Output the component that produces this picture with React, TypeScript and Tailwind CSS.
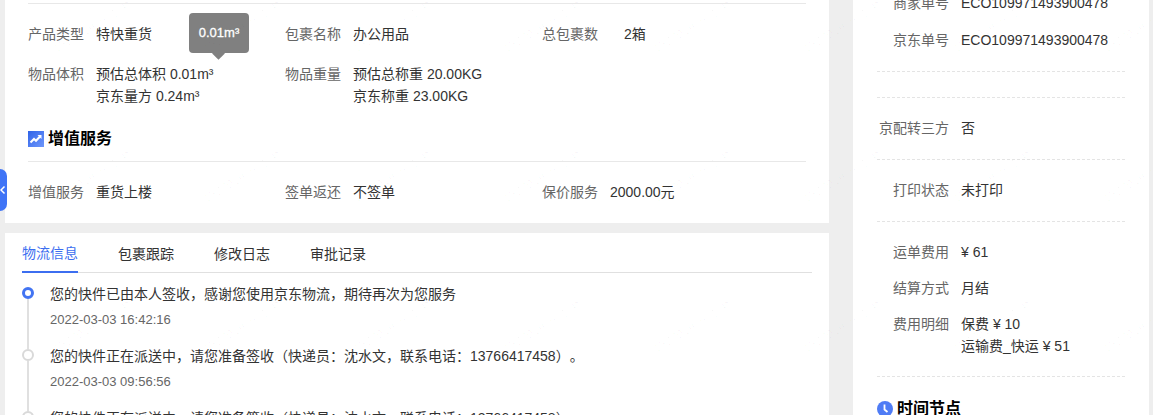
import React from 'react';

const FONT = '"Liberation Sans", "Noto Sans CJK SC", sans-serif';

const Field = ({ label, lines, gap = 'ml-3' }: { label: string; lines: string[]; gap?: string }) => (
    <div className="flex w-[257px] text-sm leading-[22px]">
        <span className="w-14 shrink-0 text-[#666666]">{label}</span>
        <div className={`${gap} text-[#333333] whitespace-nowrap`}>
            {lines.map(line => <div key={line}>{line}</div>)}
        </div>
    </div>
);

const SideRow = ({ label, lines, className = '' }: { label: string; lines: string[]; className?: string }) => (
    <div className={`flex text-sm leading-[22px] ${className}`}>
        <span className="w-[72px] shrink-0 text-right text-[#666666] whitespace-nowrap">{label}</span>
        <div className="ml-3 text-[#333333] whitespace-nowrap">
            {lines.map(line => <div key={line}>{line}</div>)}
        </div>
    </div>
);

const Dash = ({ className = '' }: { className?: string }) => (
    <div className={`border-t border-dashed border-[#e4e4e4] ${className}`} />
);

const TimelineItem = ({ text, date, active, last }: { text: string; date?: string; active?: boolean; last?: boolean }) => (
    <div className={`flex ${last ? '' : 'h-[62px]'}`}>
        <div className="relative w-3 shrink-0">
            <div className={`relative z-10 mt-[5px] h-3 w-3 rounded-full bg-white ${active ? 'border-[3px] border-[#4274f2]' : 'border-2 border-[#d9d9d9]'}`} />
            {!last && <div className="absolute left-[5px] top-[17px] h-[50px] w-[2px] bg-[#e0e0e0]" />}
        </div>
        <div className="ml-[16px] mt-[2px] leading-[22px] text-[#333333] whitespace-nowrap">
            <div className="text-sm [text-spacing-trim:space-all]">{text}</div>
            {date && <div className="mt-[5px] text-[13px] text-[#666666]">{date}</div>}
        </div>
    </div>
);

const Watermarks = () => {
    const cells: React.ReactNode[] = [];
    for (let row = 0; row < 3; row++) {
        for (let col = 0; col < 8; col++) {
            cells.push(
                <div key={`${row}-${col}`} className="flex h-[150px] w-[150px] items-center justify-center">
                    <span className="-rotate-[31deg] text-xs text-black/[0.03] whitespace-nowrap">15279190501_P</span>
                </div>
            );
        }
    }
    return (
        <div className="pointer-events-none absolute left-[17px] top-[-48px] z-30 grid w-[1200px] grid-cols-8">
            {cells}
        </div>
    );
};

export default function App() {
    return (
        <div className="relative h-[415px] w-[1153px] overflow-hidden bg-[#eeeeee]" style={{ fontFamily: FONT }}>
            <div className="flex pl-[5px]">
                {/* left column */}
                <div className="w-[824px] shrink-0">
                    <div className="h-[223px] bg-white pl-[23px] pt-[3px]">
                        <div className="h-px w-[778px] bg-[#e8e8e8]" />
                        <div className="mt-[19px] flex">
                            <Field label="产品类型" lines={['特快重货']} />
                            <Field label="包裹名称" lines={['办公用品']} />
                            <Field label="总包裹数" lines={['2箱']} gap="ml-[26px]" />
                        </div>
                        <div className="mt-[18px] flex">
                            <Field label="物品体积" lines={['预估总体积 0.01m³', '京东量方 0.24m³']} />
                            <Field label="物品重量" lines={['预估总称重 20.00KG', '京东称重 23.00KG']} />
                        </div>
                        <div className="mt-5 flex h-6 items-center">
                            <svg width="16" height="16" viewBox="0 0 16 16">
                                <defs>
                                    <linearGradient id="trend" x1="0" y1="0" x2="1" y2="1">
                                        <stop offset="0" stopColor="#2f63e8" />
                                        <stop offset="1" stopColor="#6f97fb" />
                                    </linearGradient>
                                </defs>
                                <rect width="16" height="16" fill="url(#trend)" />
                                <path d="M2.5 11.5 L6 8 L8 9.8 L12 5.5" fill="none" stroke="#fff" strokeWidth="2" />
                                <path d="M9.5 4 H13.5 V8 Z" fill="#fff" />
                            </svg>
                            <span className="ml-1 text-base font-bold text-black">增值服务</span>
                        </div>
                        <div className="mt-[10px] h-px w-[778px] bg-[#e8e8e8]" />
                        <div className="mt-[19px] flex">
                            <Field label="增值服务" lines={['重货上楼']} />
                            <Field label="签单返还" lines={['不签单']} />
                            <Field label="保价服务" lines={['2000.00元']} />
                        </div>
                    </div>
                    <div className="mt-[10px] h-[182px] bg-white pl-[17px]">
                        <div className="flex h-[40px] w-[790px] gap-10 border-b border-[#e0e0e0] text-sm">
                            <div className="-mb-px flex w-14 items-center justify-center border-b-2 border-[#3c6ef0] pt-[2px] text-[#3c6ef0]">物流信息</div>
                            <div className="flex w-14 items-center justify-center pt-[2px] text-[#333333]">包裹跟踪</div>
                            <div className="flex w-14 items-center justify-center pt-[2px] text-[#333333]">修改日志</div>
                            <div className="flex w-14 items-center justify-center pt-[2px] text-[#333333]">审批记录</div>
                        </div>
                        <div className="pt-[9px]">
                            <TimelineItem active text="您的快件已由本人签收，感谢您使用京东物流，期待再次为您服务" date="2022-03-03 16:42:16" />
                            <TimelineItem text="您的快件正在派送中，请您准备签收（快递员：沈水文，联系电话：13766417458）。" date="2022-03-03 09:56:56" />
                            <TimelineItem last text="您的快件正在派送中，请您准备签收（快递员：沈水文，联系电话：13766417458）。" />
                        </div>
                    </div>
                </div>
                {/* right column */}
                <div className="ml-6 h-[415px] w-[296px] shrink-0 bg-white px-6">
                    <div className="-mt-2">
                        <SideRow label="商家单号" lines={['ECO109971493900478']} />
                        <SideRow label="京东单号" lines={['ECO109971493900478']} className="mt-[15px]" />
                        <Dash className="mt-[20px]" />
                        <Dash className="mt-[25px]" />
                        <SideRow label="京配转三方" lines={['否']} className="mt-[19px]" />
                        <Dash className="mt-[20px]" />
                        <SideRow label="打印状态" lines={['未打印']} className="mt-[19px]" />
                        <Dash className="mt-[20px]" />
                        <SideRow label="运单费用" lines={['¥ 61']} className="mt-[19px]" />
                        <SideRow label="结算方式" lines={['月结']} className="mt-[14px]" />
                        <SideRow label="费用明细" lines={['保费 ¥ 10', '运输费_快运 ¥ 51']} className="mt-[14px]" />
                        <Dash className="mt-[19px]" />
                        <div className="mt-5 flex h-6 items-center">
                            <svg width="16" height="16" viewBox="0 0 16 16">
                                <circle cx="8" cy="8" r="8" fill="#4f7cf5" />
                                <path d="M7.5 3.5 V8.5 L10.5 11" fill="none" stroke="#fff" strokeWidth="1.8" />
                            </svg>
                            <span className="ml-1 text-base font-bold text-black">时间节点</span>
                        </div>
                    </div>
                </div>
            </div>
            {/* tooltip */}
            <div className="absolute left-[189px] top-[13px] z-20 flex h-10 w-[60px] items-center justify-center rounded bg-[#808080] pb-px text-[13px] text-white [-webkit-text-stroke:0.3px_white]">
                0.01m³
                <div className="absolute left-[25px] top-[36px] h-[9px] w-[9px] rotate-45 bg-[#808080]" />
            </div>
            {/* collapse handle */}
            <div className="absolute left-0 top-[169px] z-20 flex h-[42px] w-[7px] items-center justify-end overflow-hidden rounded-r-lg bg-[#3f74f6]">
                <svg width="7" height="12" viewBox="0 0 7 12" className="shrink-0">
                    <path d="M4.5 2.5 L1 6 L4.5 9.5" fill="none" stroke="#fff" strokeWidth="1.5" />
                </svg>
            </div>
            <Watermarks />
        </div>
    );
}
